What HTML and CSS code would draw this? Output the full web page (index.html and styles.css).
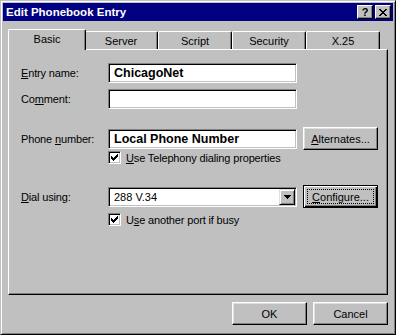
FILE: index.html
```html
<!DOCTYPE html>
<html>
<head>
<meta charset="utf-8">
<title>Edit Phonebook Entry</title>
<link rel="stylesheet" href="styles.css">
</head>
<body>
<div class="window">
  <div class="titlebar">
    <span class="title">Edit Phonebook Entry</span>
    <div class="capbtns">
      <button class="capbtn help">?</button>
      <button class="capbtn close"><svg width="8" height="7" viewBox="0 0 8 7" shape-rendering="crispEdges"><path d="M0 0h2v1h-2z M6 0h2v1h-2z M1 1h2v1h-2z M5 1h2v1h-2z M2 2h4v1h-4z M3 3h2v1h-2z M2 4h4v1h-4z M1 5h2v1h-2z M5 5h2v1h-2z M0 6h2v1h-2z M6 6h2v1h-2z" fill="#000"/></svg></button>
    </div>
  </div>
  <div class="body">
    <div class="tabs">
      <div class="tab selected">Basic</div>
      <div class="tab">Server</div>
      <div class="tab">Script</div>
      <div class="tab">Security</div>
      <div class="tab">X.25</div>
    </div>
    <div class="panel">
      <div class="row r1">
        <label class="label"><u>E</u>ntry name:</label>
        <div class="edit bold">ChicagoNet</div>
      </div>
      <div class="row r2">
        <label class="label">Co<u>m</u>ment:</label>
        <div class="edit"></div>
      </div>
      <div class="row r3">
        <label class="label">Phone <u>n</u>umber:</label>
        <div class="edit bold">Local Phone Number</div>
        <button class="btn side"><u>A</u>lternates...</button>
      </div>
      <div class="row r4">
        <span class="check"><svg width="7" height="7" viewBox="0 0 7 7" shape-rendering="crispEdges"><path d="M6 0h1v1h-1z M5 1h2v1h-2z M0 2h1v1h-1z M4 2h3v1h-3z M0 3h2v1h-2z M3 3h3v1h-3z M0 4h5v1h-5z M1 5h3v1h-3z M2 6h1v1h-1z" fill="#000"/></svg></span>
        <span class="cblabel"><u>U</u>se Telephony dialing properties</span>
      </div>
      <div class="row r5">
        <label class="label"><u>D</u>ial using:</label>
        <div class="combo">
          <span class="combotext">288 V.34</span>
          <span class="dropbtn"><svg width="7" height="4" viewBox="0 0 7 4" shape-rendering="crispEdges"><path d="M0 0h7v1h-7z M1 1h5v1h-5z M2 2h3v1h-3z M3 3h1v1h-1z" fill="#000"/></svg></span>
        </div>
        <button class="btn side default"><span class="focus"><u>C</u>onfigure...</span></button>
      </div>
      <div class="row r6">
        <span class="check"><svg width="7" height="7" viewBox="0 0 7 7" shape-rendering="crispEdges"><path d="M6 0h1v1h-1z M5 1h2v1h-2z M0 2h1v1h-1z M4 2h3v1h-3z M0 3h2v1h-2z M3 3h3v1h-3z M0 4h5v1h-5z M1 5h3v1h-3z M2 6h1v1h-1z" fill="#000"/></svg></span>
        <span class="cblabel">U<u>s</u>e another port if busy</span>
      </div>
    </div>
    <div class="actions">
      <button class="btn">OK</button>
      <button class="btn">Cancel</button>
    </div>
  </div>
</div>
</body>
</html>
```

FILE: styles.css
```css
html, body {
  margin: 0;
  padding: 0;
  background: #c0c0c0;
}

body {
  font-family: "Liberation Sans", Arial, sans-serif;
  font-size: 11px;
  color: #000;
}

.window {
  width: 396px;
  height: 335px;
  box-sizing: border-box;
  background: #c0c0c0;
  border: 1px solid;
  border-color: #c0c0c0 #000 #000 #c0c0c0;
  box-shadow: inset 1px 1px #fff, inset -1px -1px #808080;
  padding: 2px;
  display: flex;
  flex-direction: column;
}

.titlebar {
  height: 18px;
  background: #000080;
  display: flex;
  align-items: center;
  justify-content: space-between;
  padding-left: 3px;
}

.title {
  color: #fff;
  font-weight: bold;
  font-size: 11.5px;
}

.capbtns {
  display: flex;
  gap: 2px;
  margin-right: 2px;
}

.capbtn {
  width: 16px;
  height: 14px;
  padding: 0;
  margin: 0;
  box-sizing: border-box;
  background: #c0c0c0;
  border: 1px solid;
  border-color: #fff #000 #000 #fff;
  box-shadow: inset -1px -1px #808080;
  display: flex;
  align-items: center;
  justify-content: center;
  font-family: "Liberation Sans", Arial, sans-serif;
  font-weight: bold;
  font-size: 11px;
  line-height: 1;
  color: #000;
}

.body {
  padding: 0 5px;
  display: flex;
  flex-direction: column;
}

.tabs {
  margin-top: 8px;
  height: 20px;
  display: flex;
  align-items: flex-end;
  padding-left: 2px;
}

.tab {
  width: 74px;
  height: 18px;
  box-sizing: border-box;
  border-top: 1px solid #fff;
  border-left: 1px solid #fff;
  border-right: 1px solid #000;
  box-shadow: inset -1px 0 #808080;
  border-radius: 2px 2px 0 0;
  display: flex;
  align-items: center;
  justify-content: center;
  padding-top: 1px;
  background: #c0c0c0;
}

.tab.selected {
  width: 78px;
  height: 21px;
  margin: 0 -2px -1px -2px;
  padding-top: 0;
  padding-bottom: 2px;
  position: relative;
  z-index: 2;
}

.panel {
  height: 246px;
  box-sizing: border-box;
  border: 1px solid;
  border-color: #fff #000 #000 #fff;
  box-shadow: inset -1px -1px #808080;
  padding: 13px 9px 0 12px;
  display: flex;
  flex-direction: column;
}

.row {
  display: flex;
  align-items: center;
}

.r1 { height: 20px; }
.r2 { height: 20px; margin-top: 6px; }
.r3 { height: 23px; margin-top: 18px; }
.r4 { height: 13px; margin-top: 1px; padding-left: 87px; }
.r5 { height: 23px; margin-top: 21px; }
.r6 { height: 13px; margin-top: 5px; padding-left: 87px; }

.label {
  width: 87px;
  flex: none;
  letter-spacing: -0.15px;
}

.edit {
  width: 189px;
  height: 20px;
  box-sizing: border-box;
  background: #fff;
  border: 1px solid;
  border-color: #808080 #fff #fff #808080;
  box-shadow: inset 1px 1px #000, inset -1px -1px #c0c0c0;
  padding: 0 4px 0 5px;
  display: flex;
  align-items: center;
  flex: none;
}

.bold {
  font-weight: bold;
  font-size: 12.5px;
}

.btn {
  width: 75px;
  height: 23px;
  box-sizing: border-box;
  padding: 0;
  margin: 0;
  background: #c0c0c0;
  border: 1px solid;
  border-color: #fff #000 #000 #fff;
  box-shadow: inset -1px -1px #808080, inset 1px 1px #dfdfdf;
  font-family: "Liberation Sans", Arial, sans-serif;
  font-size: 11px;
  color: #000;
  display: flex;
  align-items: center;
  justify-content: center;
}

.btn.side {
  margin-left: 6px;
}

.btn.default {
  border-color: #000;
  box-shadow: inset 1px 1px #fff, inset -1px -1px #000, inset -2px -2px #808080;
  padding: 3px;
}

.focus {
  flex: 1;
  align-self: stretch;
  border: 1px dotted #000;
  display: flex;
  align-items: center;
  justify-content: center;
}

.check {
  width: 13px;
  height: 13px;
  box-sizing: border-box;
  background: #fff;
  border: 1px solid;
  border-color: #808080 #fff #fff #808080;
  box-shadow: inset 1px 1px #000, inset -1px -1px #c0c0c0;
  display: flex;
  align-items: center;
  justify-content: center;
  flex: none;
}

.cblabel {
  margin-left: 5px;
  letter-spacing: -0.15px;
}

.combo {
  width: 189px;
  height: 20px;
  box-sizing: border-box;
  background: #fff;
  border: 1px solid;
  border-color: #808080 #fff #fff #808080;
  box-shadow: inset 1px 1px #000, inset -1px -1px #c0c0c0;
  padding: 1px 1px 1px 5px;
  display: flex;
  align-items: center;
  flex: none;
}

.combotext {
  flex: 1;
}

.dropbtn {
  width: 16px;
  align-self: stretch;
  box-sizing: border-box;
  background: #c0c0c0;
  border: 1px solid;
  border-color: #dfdfdf #000 #000 #dfdfdf;
  box-shadow: inset 1px 1px #fff, inset -1px -1px #808080;
  display: flex;
  align-items: center;
  justify-content: center;
}

.actions {
  margin-top: 7px;
  display: flex;
  justify-content: flex-end;
  gap: 6px;
}
```
